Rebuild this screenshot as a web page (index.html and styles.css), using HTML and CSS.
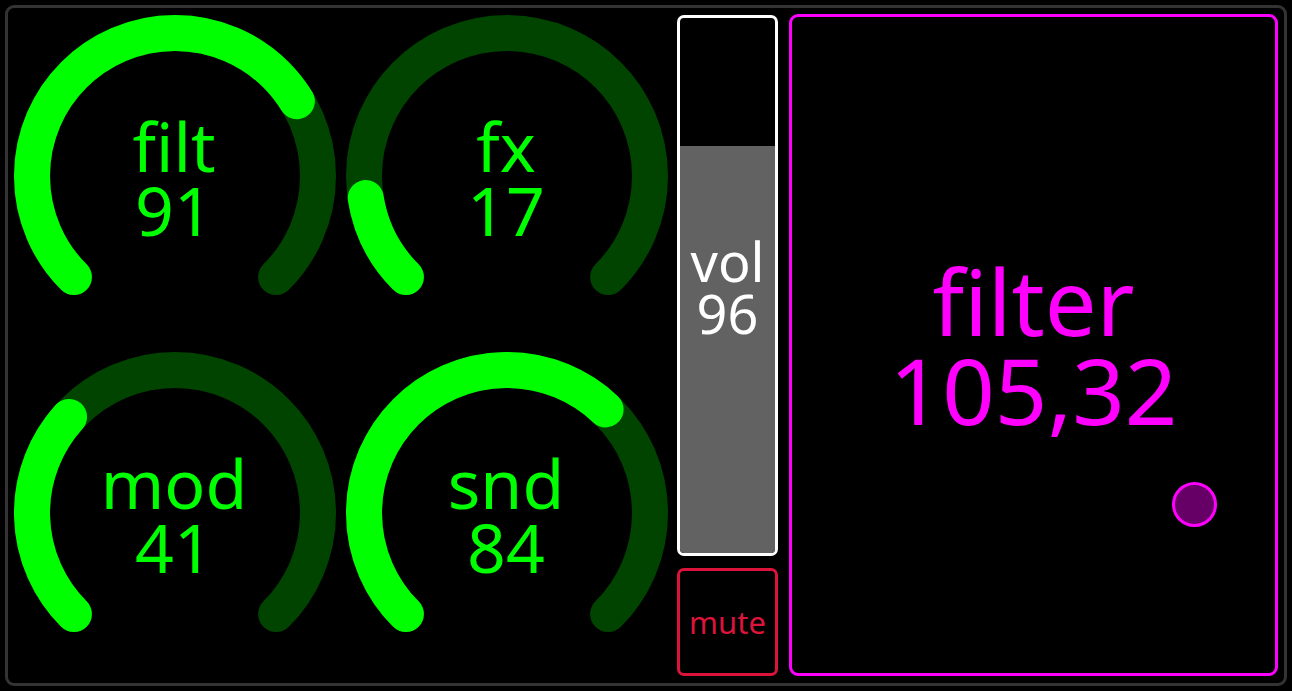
FILE: index.html
```html
<!DOCTYPE html>
<html>
<head>
<meta charset="utf-8">
<link rel="stylesheet" href="styles.css">
</head>
<body>
<div class="app">
  <div class="knobs">
    <div class="knob">
      <svg class="dial" viewBox="0 0 330 330" width="330" height="330">
        <path class="track" d="M 63.9 266.1 A 143 143 0 1 1 266.1 266.1" pathLength="127"/>
        <path class="value" d="M 63.9 266.1 A 143 143 0 1 1 266.1 266.1" pathLength="127" stroke-dasharray="91 400"/>
      </svg>
      <div class="label">filt<br>91</div>
    </div>
    <div class="knob">
      <svg class="dial" viewBox="0 0 330 330" width="330" height="330">
        <path class="track" d="M 63.9 266.1 A 143 143 0 1 1 266.1 266.1" pathLength="127"/>
        <path class="value" d="M 63.9 266.1 A 143 143 0 1 1 266.1 266.1" pathLength="127" stroke-dasharray="17 400"/>
      </svg>
      <div class="label">fx<br>17</div>
    </div>
    <div class="knob">
      <svg class="dial" viewBox="0 0 330 330" width="330" height="330">
        <path class="track" d="M 63.9 266.1 A 143 143 0 1 1 266.1 266.1" pathLength="127"/>
        <path class="value" d="M 63.9 266.1 A 143 143 0 1 1 266.1 266.1" pathLength="127" stroke-dasharray="41 400"/>
      </svg>
      <div class="label">mod<br>41</div>
    </div>
    <div class="knob">
      <svg class="dial" viewBox="0 0 330 330" width="330" height="330">
        <path class="track" d="M 63.9 266.1 A 143 143 0 1 1 266.1 266.1" pathLength="127"/>
        <path class="value" d="M 63.9 266.1 A 143 143 0 1 1 266.1 266.1" pathLength="127" stroke-dasharray="84 400"/>
      </svg>
      <div class="label">snd<br>84</div>
    </div>
  </div>
  <div class="side">
    <div class="vol">
      <div class="vol-fill" style="height: 76%"></div>
      <div class="vol-label">vol<br>96</div>
    </div>
    <div class="mute">mute</div>
  </div>
  <div class="pad">
    <div class="pad-label">filter<br>105,32</div>
    <div class="dot"></div>
  </div>
</div>
</body>
</html>
```
FILE: styles.css
```css
html, body {
  margin: 0;
  padding: 0;
  background: #000;
  height: 100%;
}

body {
  font-family: "Noto Sans", "Liberation Sans", sans-serif;
}

.app {
  box-sizing: border-box;
  margin: 5px;
  height: 681px;
  border: 3px solid #333;
  border-radius: 9px;
  display: flex;
  background: #000;
}

.knobs {
  width: 660px;
  flex: none;
  display: grid;
  grid-template-columns: 1fr 1fr;
  grid-template-rows: 1fr 1fr;
}

.knob {
  display: grid;
  place-items: center;
}

.dial,
.label {
  grid-area: 1 / 1;
}

.dial {
  display: block;
  margin: -2px 0 0 2px;
}

.track,
.value {
  fill: none;
  stroke-width: 36;
  stroke-linecap: round;
}

.track {
  stroke: #004400;
}

.value {
  stroke: #00ff00;
}

.label {
  color: #00ff00;
  font-size: 68px;
  line-height: 0.94;
  text-align: center;
  margin-top: 2px;
}

.side {
  width: 101px;
  flex: none;
  margin-left: 9px;
  padding: 7px 0;
  display: flex;
  flex-direction: column;
  gap: 12px;
}

.vol {
  flex: 1;
  box-sizing: border-box;
  border: 3px solid #fff;
  border-radius: 7px;
  overflow: hidden;
  display: grid;
  background: #000;
}

.vol-fill,
.vol-label {
  grid-area: 1 / 1;
}

.vol-fill {
  align-self: end;
  background: #626262;
}

.vol-label {
  align-self: center;
  justify-self: center;
  color: #fff;
  font-size: 54px;
  line-height: 0.96;
  text-align: center;
  margin-top: 4px;
}

.mute {
  height: 108px;
  box-sizing: border-box;
  border: 3px solid #dc143c;
  border-radius: 7px;
  display: grid;
  place-items: center;
  color: #dc143c;
  font-size: 31px;
}

.pad {
  flex: 1;
  margin: 6px 6px 7px 11px;
  border: 3px solid #ff00ff;
  border-radius: 9px;
  position: relative;
  display: grid;
  place-items: center;
}

.pad-label {
  color: #ff00ff;
  font-size: 92px;
  line-height: 0.97;
  text-align: center;
  margin-top: 0;
}

.dot {
  position: absolute;
  left: 380px;
  top: 465px;
  width: 39px;
  height: 39px;
  border: 3px solid #ff00ff;
  border-radius: 50%;
  background: #660066;
}
```
